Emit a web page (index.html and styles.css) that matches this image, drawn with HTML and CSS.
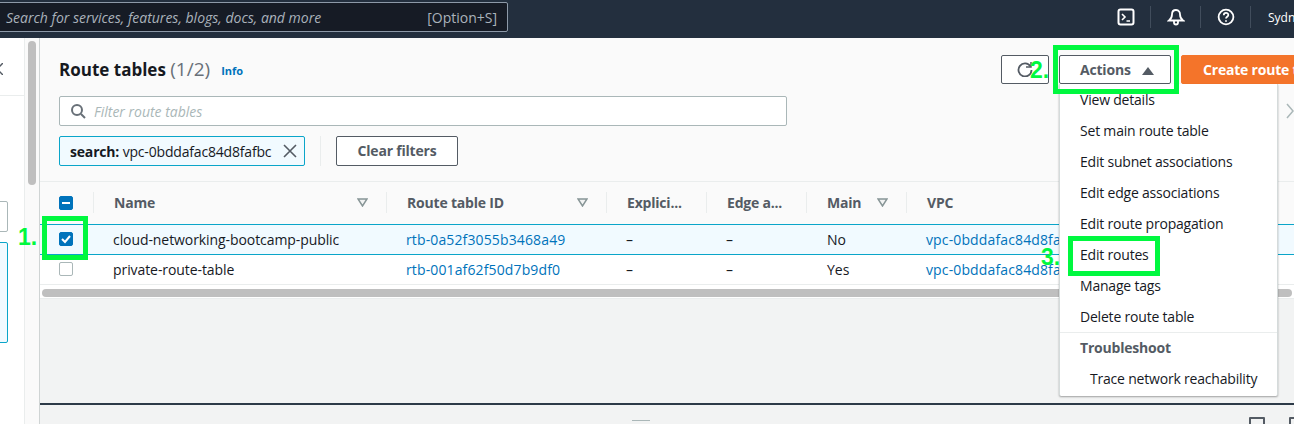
FILE: index.html
```html
<!DOCTYPE html>
<html>
<head>
<meta name="viewport" content="width=device-width, initial-scale=1.0">
<link rel="stylesheet" href="styles.css">
</head>
<body>
<div class="topbar">
  <div class="searchbox">
    <em>Search for services, features, blogs, docs, and more</em>
    <span>[Option+S]</span>
  </div>
  <div class="topicons">
    <div class="topicon">
      <svg width="18" height="18" viewBox="0 0 18 18" fill="none" stroke="#fff" stroke-width="2"><rect x="1.5" y="1.5" width="15" height="15" rx="2"/><path d="M5 6l3 3-3 3M9.5 13h3.5" stroke-width="1.6"/></svg>
    </div>
    <div class="topicon">
      <svg width="18" height="18" viewBox="0 0 18 18" fill="none" stroke="#fff" stroke-width="1.8"><path d="M9 2c-3 0-4 2.4-4 4.500 0 3-1 4.500-3 6h14c-2-1.500-3-3-3-6C13 4.400 12 2 9 2zM7 13v1.500a2 2 0 0 0 4 0V13"/></svg>
    </div>
    <div class="topicon">
      <svg width="18" height="18" viewBox="0 0 18 18" fill="none" stroke="#fff" stroke-width="1.8"><circle cx="9" cy="9" r="7.4"/><path d="M6.8 7.2c0-3 4.500-3 4.500-.2 0 1.700-2.300 1.800-2.300 3.500"/><path d="M9 12.200v1.600"/></svg>
    </div>
    <div class="region">Sydney</div>
  </div>
</div>

<div class="main">
  <div class="sidenav">
    <svg class="navclose" width="3" height="12" viewBox="0 0 3 12" fill="none" stroke="#545b64" stroke-width="1.5"><path d="M-9 0l12 12M-9 12L3 0"/></svg>
    <div class="navline"></div>
    <div class="navinput"></div>
    <div class="navbox"></div>
  </div>
  <div class="scrollstrip"><div class="scrollthumb"></div></div>
  <div class="content">
    <div class="panel">
      <div class="panelhead">
        <div class="titlerow">
          <h1>Route tables <span class="count">(1/2)</span></h1>
          <a class="info">Info</a>
          <div class="titlebuttons">
            <button class="btn refresh">
              <svg width="16" height="16" viewBox="0 0 16 16" fill="none" stroke="#545b64" stroke-width="1.8"><path d="M13.5 5.500A6.500 6.500 0 1 0 14.500 9"/><path d="M14 1v5h-5" stroke-width="1.5"/></svg>
            </button>
            <button class="btn actions">Actions <i class="caret"></i></button>
            <button class="btn create">Create route table</button>
          </div>
        </div>
        <div class="filterbox">
          <svg width="16" height="16" viewBox="0 0 16 16" fill="none" stroke="#687078" stroke-width="2"><circle cx="7" cy="7" r="5"/><path d="M11 11l4 4"/></svg>
          <em>Filter route tables</em>
        </div>
        <div class="tokenrow">
          <div class="token">
            <span><b>search:</b> vpc-0bddafac84d8fafbc</span>
            <svg width="14" height="14" viewBox="0 0 14 14" fill="none" stroke="#545b64" stroke-width="1.6"><path d="M1 1l12 12M13 1L1 13"/></svg>
          </div>
          <div class="tokensep"></div>
          <button class="btn clear">Clear filters</button>
        </div>
      </div>

      <table>
        <tr class="headrow">
          <th class="c0"><div class="th"><span class="cb cb-on cb-dash"></span></div></th>
          <th class="c1"><div class="th">Name<svg class="sort" width="11" height="9" viewBox="0 0 11 9"><polygon points="1,1 10,1 5.500,8"/></svg></div></th>
          <th class="c2"><div class="th">Route table ID<svg class="sort" width="11" height="9" viewBox="0 0 11 9"><polygon points="1,1 10,1 5.500,8"/></svg></div></th>
          <th class="c3"><div class="th">Explici...</div></th>
          <th class="c4"><div class="th">Edge a...</div></th>
          <th class="c5"><div class="th">Main<svg class="sort" width="11" height="9" viewBox="0 0 11 9"><polygon points="1,1 10,1 5.500,8"/></svg></div></th>
          <th class="c6"><div class="th last">VPC</div></th>
        </tr>
        <tr class="selected">
          <td><span class="cb cb-on"><svg width="12" height="12" viewBox="0 0 12 12" fill="none" stroke="#fff" stroke-width="2"><path d="M2 6l3 3 5-6"/></svg></span></td>
          <td class="name">cloud-networking-bootcamp-public</td>
          <td><a>rtb-0a52f3055b3468a49</a></td>
          <td>–</td>
          <td>–</td>
          <td class="c5">No</td>
          <td><a>vpc-0bddafac84d8fafbc</a></td>
        </tr>
        <tr>
          <td><span class="cb"></span></td>
          <td class="name">private-route-table</td>
          <td><a>rtb-001af62f50d7b9df0</a></td>
          <td>–</td>
          <td>–</td>
          <td class="c5">Yes</td>
          <td><a>vpc-0bddafac84d8fafbc</a></td>
        </tr>
      </table>
      <div class="hscroll"><div class="hthumb"></div></div>
    </div>
    <div class="gap"></div>
    <div class="splitpanel">
      <div class="handle"></div>
      <div class="splitbuttons"><i></i><i></i></div>
    </div>
  </div>
</div>

<svg class="pageright" width="8" height="16" viewBox="0 0 8 16" fill="none" stroke="#aab7b8" stroke-width="1.5"><path d="M1 1l6 7-6 7"/></svg>

<div class="menu">
  <div class="item">View details</div>
  <div class="item">Set main route table</div>
  <div class="item">Edit subnet associations</div>
  <div class="item">Edit edge associations</div>
  <div class="item">Edit route propagation</div>
  <div class="item">Edit routes</div>
  <div class="item">Manage tags</div>
  <div class="item">Delete route table</div>
  <div class="item group">Troubleshoot</div>
  <div class="item sub">Trace network reachability</div>
</div>

<div class="mark mark1"></div>
<div class="mark mark2"></div>
<div class="mark mark3"></div>
<div class="step step1">1.</div>
<div class="step step2">2.</div>
<div class="step step3">3.</div>
</body>
</html>
```

FILE: styles.css
```css
* {
  box-sizing: border-box;
}
html, body {
  margin: 0;
  height: 424px;
  overflow: hidden;
}
body {
  position: relative;
  width: 1294px;
  font-family: "Open Sans", "Liberation Sans", sans-serif;
  font-size: 14px;
  color: #16191f;
  background-color: #fff;
}
em {
  font-style: italic;
}
button {
  font-family: inherit;
}

/* top bar */
.topbar {
  height: 38px;
  background-color: #232f3e;
  display: flex;
  align-items: flex-start;
  padding-top: 2px;
  overflow: hidden;
}
.searchbox {
  width: 529px;
  height: 30px;
  margin-left: -21px;
  padding: 0 10px 0 26px;
  display: flex;
  align-items: center;
  justify-content: space-between;
  background-color: #161b25;
  border: 1px solid #8d99a8;
  border-radius: 2px;
  color: #aab2bb;
}
.topicons {
  margin-left: auto;
  height: 30px;
  display: flex;
  align-items: center;
  color: #fff;
}
.topicon {
  width: 50px;
  height: 22px;
  display: flex;
  align-items: center;
  justify-content: center;
  border-right: 1px solid #414d5c;
}
.region {
  width: 26px;
  margin-left: 17px;
  font-size: 12px;
  white-space: nowrap;
}

.main {
  display: flex;
  height: 386px;
}

/* left side */
.sidenav {
  position: relative;
  width: 25px;
  background-color: #fff;
  border-right: 1px solid #eaeded;
}
.navclose {
  position: absolute;
  left: 0;
  top: 25px;
}
.navline {
  margin-top: 57px;
  height: 1px;
  background-color: #eaeded;
}
.navinput {
  margin: 105px 0 0 -5px;
  width: 13px;
  height: 31px;
  background-color: #fff;
  border: 1px solid #aab7b8;
  border-radius: 2px;
}
.navbox {
  margin: 10px 0 0 -5px;
  width: 13px;
  height: 101px;
  background-color: #f1faff;
  border: 1px solid #0aa5c9;
  border-radius: 2px;
}
.scrollstrip {
  width: 14px;
  padding: 3px 0 0 3px;
  background-color: #fafafa;
}
.scrollthumb {
  width: 8px;
  height: 144px;
  background-color: #bfbfbf;
  border-radius: 4px;
}

/* main content */
.content {
  flex: 1;
  min-width: 0;
  border-left: 1px solid #cfd4d4;
  background-color: #f2f3f3;
  display: flex;
  flex-direction: column;
}
.panel {
  background-color: #fafafa;
}
.panelhead {
  height: 144px;
  padding: 18px 0 0 19px;
  border-bottom: 1px solid #eaeded;
}
.titlerow {
  display: flex;
  align-items: center;
  height: 26px;
}
h1 {
  margin: 0;
  font-size: 17px;
  font-weight: 700;
  line-height: 24px;
}
.count {
  font-size: 19px;
  font-weight: 400;
  color: #687078;
}
.info {
  margin-left: 11px;
  margin-top: 3px;
  font-size: 11px;
  font-weight: 700;
  color: #0073bb;
}
.titlebuttons {
  margin-left: auto;
  margin-right: -27px;
  display: flex;
  gap: 10px;
}
.btn {
  height: 29px;
  padding: 0;
  background-color: #fff;
  border: 1px solid #545b64;
  border-radius: 2px;
  color: #545b64;
  font-size: 14px;
  font-weight: 700;
  letter-spacing: -0.2px;
}
.refresh {
  width: 48px;
  display: flex;
  align-items: center;
  justify-content: center;
}
.actions {
  width: 112px;
  text-align: left;
  padding-left: 20px;
}
.caret {
  display: inline-block;
  margin-left: 8px;
  border-left: 6px solid transparent;
  border-right: 6px solid transparent;
  border-bottom: 8px solid #545b64;
}
.create {
  width: 140px;
  background-color: #f4742a;
  border-color: #f4742a;
  color: #fff;
  white-space: nowrap;
  text-align: left;
  padding-left: 21px;
}
.filterbox {
  margin-top: 14px;
  width: 728px;
  height: 30px;
  padding-left: 10px;
  display: flex;
  align-items: center;
  gap: 8px;
  background-color: #fff;
  border: 1px solid #aab7b8;
  border-radius: 2px;
  color: #aab7b8;
}
.tokenrow {
  margin-top: 10px;
  display: flex;
  align-items: center;
}
.token {
  width: 246px;
  height: 30px;
  padding: 0 7px 0 10px;
  display: flex;
  align-items: center;
  justify-content: space-between;
  background-color: #f1faff;
  border: 1px solid #0aa5c9;
  border-radius: 2px;
  white-space: nowrap;
  letter-spacing: -0.18px;
}
.tokensep {
  width: 1px;
  height: 30px;
  margin: 0 15px;
  background-color: #eaeded;
}
.clear {
  width: 122px;
  height: 30px;
  padding-bottom: 2px;
}

/* table */
table {
  width: 1254px;
  border-collapse: collapse;
  table-layout: fixed;
  background-color: #fff;
}
.c0 { width: 54px; }
.c1 { width: 293px; }
.c2 { width: 220px; }
.c3 { width: 100px; }
.c4 { width: 100px; }
.c5 { width: 100px; }
.c6 { width: 387px; }
.headrow {
  height: 42px;
  background-color: #fafafa;
}
th {
  padding: 0;
  text-align: left;
  color: #545b64;
  font-weight: 700;
  letter-spacing: -0.2px;
}
.th {
  height: 21px;
  padding-left: 20px;
  padding-right: 18px;
  display: flex;
  align-items: center;
  justify-content: space-between;
  border-right: 1px solid #eaeded;
}
.c0 .th {
  padding-left: 19px;
}
.th.last {
  border-right: 0;
}
.sort {
  fill: #f2f3f3;
  stroke: #879596;
  stroke-width: 1.5;
}
td {
  height: 30px;
  padding: 0 0 0 19px;
  white-space: nowrap;
  overflow: hidden;
  border-bottom: 1px solid #eaeded;
}
td.c5 {
  padding-left: 20px;
}
.name {
  letter-spacing: -0.08px;
}
.selected td {
  background-color: #f1faff;
  border-top: 1px solid #0aa5c9;
  border-bottom: 1px solid #0aa5c9;
}
a {
  color: #0073bb;
}
td a {
  letter-spacing: 0.13px;
}
.cb {
  width: 14px;
  height: 14px;
  display: flex;
  align-items: center;
  justify-content: center;
  background-color: #fff;
  border: 1px solid #aab7b8;
  border-radius: 2px;
}
.cb-on {
  background-color: #0073bb;
  border-color: #0073bb;
}
.cb-dash::after {
  content: "";
  width: 8px;
  height: 2px;
  background-color: #fff;
}
.hscroll {
  height: 14px;
  padding: 4px 2px 0 2px;
  background-color: #fff;
  border-bottom: 1px solid #eaeded;
}
.hthumb {
  height: 8px;
  background-color: #bfbfbf;
  border-radius: 4px;
}
.gap {
  height: 104px;
}
.splitpanel {
  position: relative;
  flex: 1;
  border-top: 2px solid #2d3a48;
}
.handle {
  position: absolute;
  left: 592px;
  top: 15px;
  width: 18px;
  height: 5px;
  border-top: 1px solid #aab7b8;
  border-bottom: 1px solid #aab7b8;
}
.splitbuttons {
  position: absolute;
  right: -11px;
  top: 12px;
  display: flex;
  gap: 24px;
}
.splitbuttons i {
  display: block;
  width: 16px;
  height: 16px;
  border: 2px solid #545b64;
  border-radius: 1px;
}
.pageright {
  position: absolute;
  left: 1286px;
  top: 103px;
}

/* dropdown */
.menu {
  position: absolute;
  left: 1059px;
  top: 84px;
  width: 219px;
  background-color: #fff;
  border-left: 1px solid #d5dbdb;
  border-right: 1px solid #d5dbdb;
  border-radius: 0 0 2px 2px;
  box-shadow: 0 1px 2px rgba(0, 0, 0, 0.35);
  padding-bottom: 2px;
  letter-spacing: -0.2px;
}
.item {
  height: 31px;
  padding-left: 20px;
  display: flex;
  align-items: center;
  white-space: nowrap;
}
.group {
  padding-bottom: 2px;
  font-weight: 700;
  color: #545b64;
  border-top: 1px solid #eaeded;
}
.sub {
  padding-left: 30px;
}

/* annotations over the screenshot */
.mark {
  position: absolute;
  border: 5px solid #00f83f;
}
.mark1 {
  left: 42px;
  top: 216px;
  width: 46px;
  height: 44px;
}
.mark2 {
  left: 1053px;
  top: 45px;
  width: 126px;
  height: 49px;
}
.mark3 {
  left: 1068px;
  top: 236px;
  width: 92px;
  height: 40px;
}
.step {
  position: absolute;
  font-family: "Liberation Sans", sans-serif;
  font-size: 23px;
  line-height: 24px;
  font-weight: 700;
  color: #00f83f;
}
.step1 { left: 18px; top: 225px; }
.step2 { left: 1030px; top: 58px; }
.step3 { left: 1041px; top: 245px; }
```
